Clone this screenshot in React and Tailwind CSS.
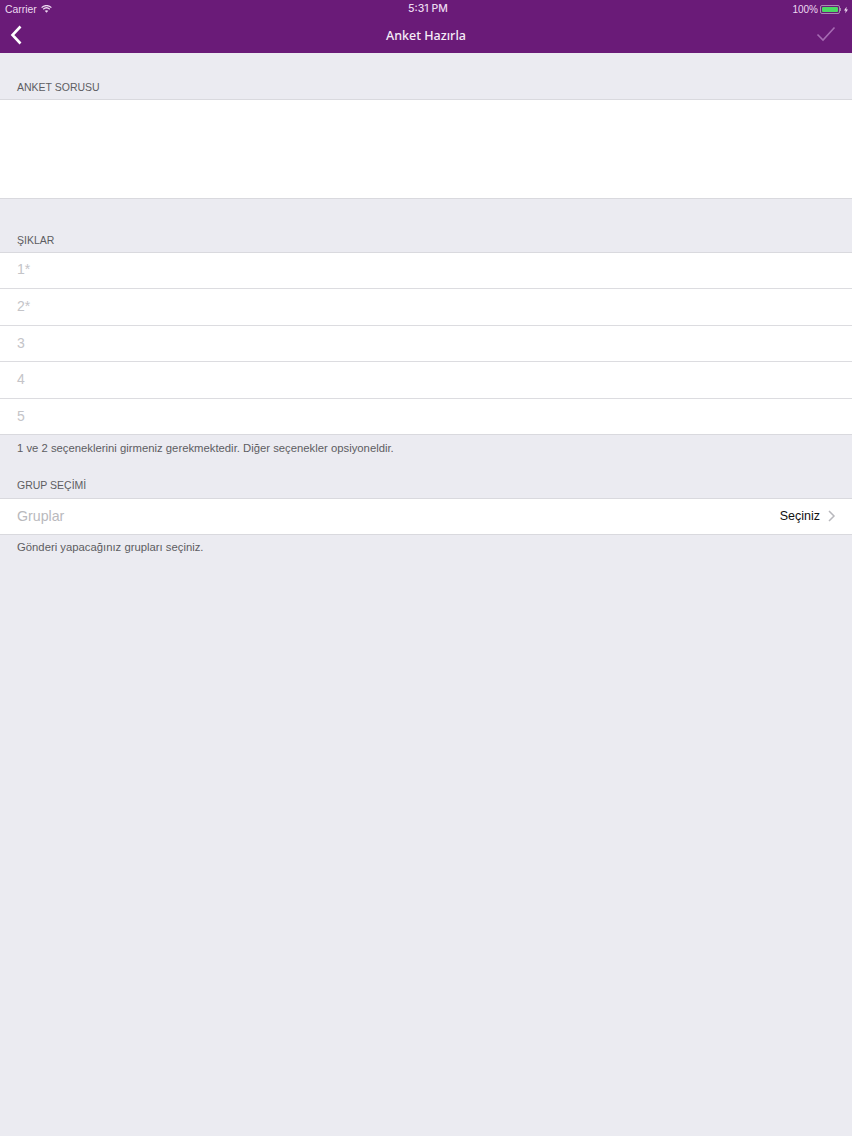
const options = [
  { label: '1*', row: 'h-[36px] pb-[2px]' },
  { label: '2*', row: 'h-[37px] pb-[2px]' },
  { label: '3', row: 'h-[36px] pb-[1px]' },
  { label: '4', row: 'h-[37px] pb-[2px]' },
];

const SectionTitle = ({ children, className }) => (
  <div className={`px-[17px] text-[10.5px] leading-[13px] text-[#5d5d62] ${className}`}>{children}</div>
);

const FootNote = ({ children, className }) => (
  <div className={`px-[17px] text-[11.3px] leading-[13px] text-[#5d5d62] ${className}`}>{children}</div>
);

const StatusBar = () => (
  <div className="relative flex h-[18px] items-center justify-between pl-[5px] pr-[4px] pt-[1px] text-[10.4px] text-[#ecd9f0]">
    <div className="flex items-center gap-[4px]">
      <span>Carrier</span>
      <svg width="11" height="8" viewBox="0 0 11 8" fill="none" stroke="#ecd9f0" strokeWidth="1.3" className="-mt-[1px]">
        <path d="M.6 2.6C3.4-.1 7.6-.1 10.4 2.6" />
        <path d="M2.2 4.2c1.9-1.7 4.7-1.7 6.6 0" />
        <path d="M5.5 7.8 3.7 5.8c1-.9 2.6-.9 3.6 0z" fill="#ecd9f0" stroke="none" />
      </svg>
    </div>
    <span className="absolute left-[408px] top-[2px] font-['Inter',sans-serif] text-[10.5px] font-medium leading-[14px]">5:31 PM</span>
    <div className="flex items-center">
      <span className="mr-[2px] text-[10px]">100%</span>
      <div className="flex h-[9px] w-[20px] rounded-[2px] border border-[#a98ab2] p-[1px]">
        <div className="flex-1 rounded-[1px] bg-[#4cd964]" />
      </div>
      <div className="h-[3px] w-[1px] bg-[#a98ab2]" />
      <svg width="4" height="8" viewBox="0 0 5 8" className="ml-[3px]">
        <path d="M3.2 0 0 4.6h2L1.6 8 5 3.3H2.9z" fill="#ecd9f0" />
      </svg>
    </div>
  </div>
);

const NavBar = () => (
  <div className="relative flex h-[35px] items-center justify-between pl-[10px] pr-[16px]">
    <svg width="12" height="20" viewBox="0 0 12 20" fill="none" stroke="#ffffff" strokeWidth="2.6" className="-mt-[2px]">
      <path d="M10.5 1.5 2.5 10l8 8.5" />
    </svg>
    <span className="absolute inset-x-0 top-[9px] text-center font-['Noto_Sans',sans-serif] text-[12.5px] font-medium leading-[18px] text-[#f5ecf7]">
      Anket Hazırla
    </span>
    <svg width="20" height="16" viewBox="0 0 20 16" fill="none" stroke="#a66bb3" strokeWidth="1.6" className="-mt-[3px]">
      <path d="M1.5 8.5 7 14 18.5 1.5" />
    </svg>
  </div>
);

export default function App() {
  return (
    <div className="flex min-h-[1136px] flex-col bg-[#ebebf1] font-['Liberation_Sans',sans-serif]">
      <div className="h-[53px] bg-[#6a1b78]">
        <StatusBar />
        <NavBar />
      </div>

      <SectionTitle className="pt-[28px]">ANKET SORUSU</SectionTitle>
      <div className="mt-[5px] h-[100px] border-y border-[#d9d9de] bg-white" />

      <SectionTitle className="pt-[35px]">ŞIKLAR</SectionTitle>
      <div className="mt-[5px] border-y border-[#d9d9de] bg-white">
        {options.map((option) => (
          <div
            key={option.label}
            className={`flex ${option.row} items-center border-b border-[#dcdce0] pl-[17px] text-[14px] text-[#c4c4c8]`}
          >
            {option.label}
          </div>
        ))}
        <div className="flex h-[35px] items-center pl-[17px] text-[14px] text-[#c4c4c8]">5</div>
      </div>
      <FootNote className="pt-[7px]">1 ve 2 seçeneklerini girmeniz gerekmektedir. Diğer seçenekler opsiyoneldir.</FootNote>

      <SectionTitle className="pt-[24px]">GRUP SEÇİMİ</SectionTitle>
      <div className="mt-[6px] flex h-[37px] items-center justify-between border-y border-[#d9d9de] bg-white pl-[17px] pr-[16px]">
        <span className="text-[14.2px] text-[#b9b9bd]">Gruplar</span>
        <div className="flex items-center gap-[7px]">
          <span className="text-[12.5px] text-[#111111]">Seçiniz</span>
          <svg width="9" height="12" viewBox="0 0 9 12" fill="none" stroke="#b8b8bd" strokeWidth="1.5" className="-mt-[1px]">
            <path d="M2 1 7 6l-5 5" />
          </svg>
        </div>
      </div>
      <FootNote className="pt-[6px]">Gönderi yapacağınız grupları seçiniz.</FootNote>
    </div>
  );
}
